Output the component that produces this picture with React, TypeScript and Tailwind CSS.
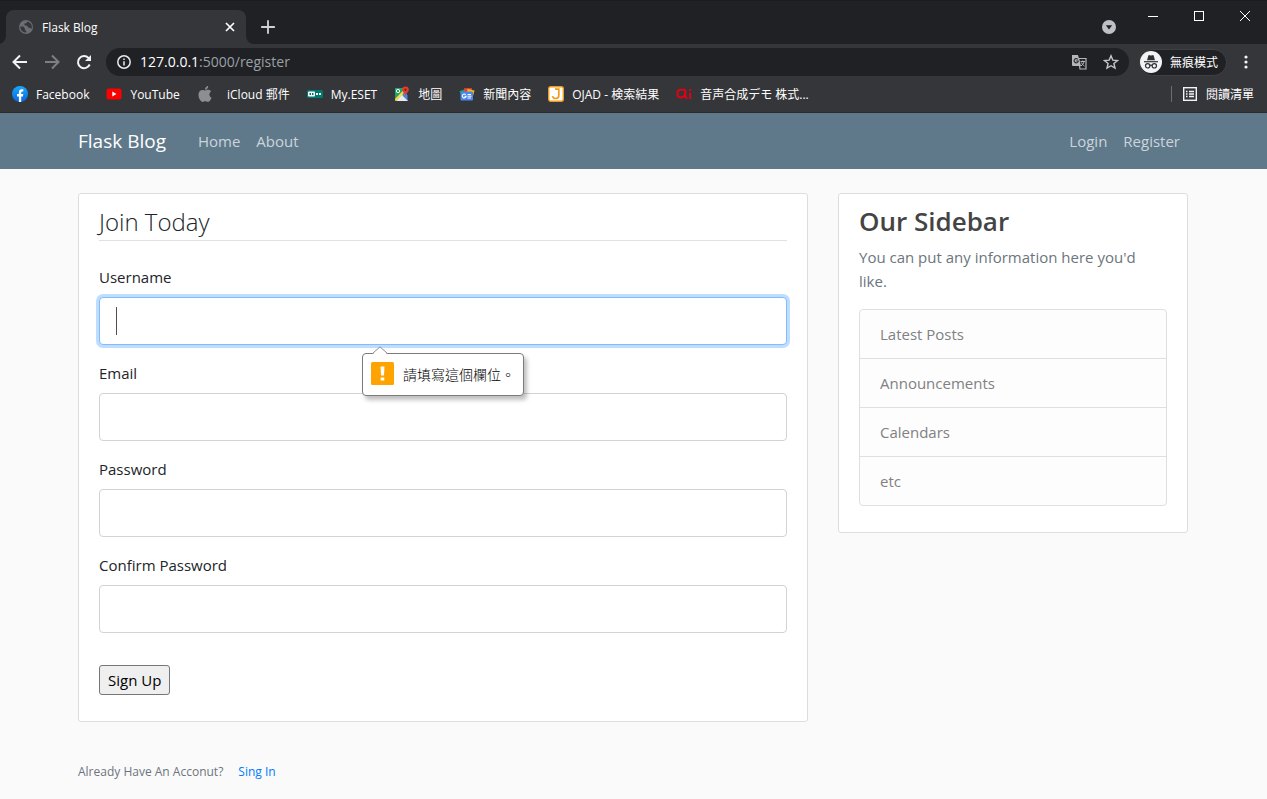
import React from "react";

type IconProps = { className?: string };

function GlobeIcon() {
  return (
    <svg viewBox="0 0 14 14" className="size-3.5 shrink-0">
      <circle cx="7" cy="7" r="7" fill="#6a6d71" />
      <path
        d="M1.300 6.500h2.900l1.600 1.700v1.500l1.400 1.200v1.600C3.900 12.700 1.200 10 1.300 6.500z M8.600 1.500 7.300 3.200 5.500 3.500v1.700l2.700.6 1.200 1.900h1.500l1.600 1.200c1.200-3.200-.6-6.400-3.900-7.400z"
        fill="#35363a"
      />
    </svg>
  );
}

function FacebookIcon() {
  return (
    <svg viewBox="0 0 16 16" className="size-4 shrink-0">
      <defs>
        <linearGradient id="fb" x1="0" y1="0" x2="0" y2="1">
          <stop offset="0" stopColor="#19a8fb" />
          <stop offset="1" stopColor="#0866e0" />
        </linearGradient>
      </defs>
      <circle cx="8" cy="8" r="8" fill="url(#fb)" />
      <path
        d="M6.9 16v-5.500H5V8.100h1.900V6.400c0-2 1.100-3.100 2.900-3.100.8 0 1.500.1 1.500.1v2h-.9c-.9 0-1.200.6-1.200 1.200v1.500h2.100l-.4 2.400H9.200V16z"
        fill="#fff"
      />
    </svg>
  );
}

function YouTubeIcon() {
  return (
    <svg viewBox="0 0 16 16" className="size-4 shrink-0">
      <rect x="0.500" y="2.500" width="15" height="11" rx="2.500" fill="#f00" />
      <path d="M6.300 5.500v5l4.200-2.500z" fill="#fff" />
    </svg>
  );
}

function AppleIcon() {
  return (
    <svg viewBox="0 0 24 24" className="size-4 shrink-0" fill="#8e8e90">
      <path d="M12.152 6.896c-.948 0-2.415-1.078-3.960-1.040-2.040.027-3.910 1.183-4.961 3.014-2.117 3.675-.546 9.103 1.519 12.090 1.013 1.454 2.208 3.090 3.792 3.039 1.520-.065 2.090-.987 3.935-.987 1.831 0 2.350.987 3.960.948 1.637-.026 2.676-1.480 3.676-2.948 1.156-1.688 1.636-3.325 1.662-3.415-.039-.013-3.182-1.221-3.220-4.857-.026-3.040 2.480-4.494 2.597-4.559-1.429-2.090-3.623-2.324-4.390-2.376-2-.156-3.675 1.090-4.610 1.090zM15.530 3.830c.843-1.012 1.400-2.427 1.245-3.830-1.207.052-2.662.805-3.532 1.818-.780.896-1.454 2.338-1.273 3.714 1.338.104 2.715-.688 3.559-1.701" />
    </svg>
  );
}

function EsetIcon() {
  return (
    <svg viewBox="0 0 16 16" className="size-4 shrink-0">
      <rect y="4" width="16" height="8" rx="1.500" fill="#00796f" />
      <rect x="1" y="5.500" width="7" height="5" rx="1" fill="#fff" />
      <path d="M2.500 7h1.500v2H2.500zM5 7h1.500v2H5z" fill="#00796f" />
      <path d="M9 7h2v2H9zM12 7h2v2h-2z" fill="#fff" />
    </svg>
  );
}

function MapsIcon() {
  return (
    <svg viewBox="0 0 16 16" className="size-4 shrink-0">
      <path d="M1 2h12v6L2 14H1z" fill="#1fa463" />
      <path d="M1 13 11 2.500l2 2L2 15l-1-.5z" fill="#fdd835" />
      <path d="M8.500 8 11 5.500l2.500 4V15z" fill="#4a89f3" />
      <path d="M2 15l6-6.200 6 6.200z" fill="#e8eaed" />
      <circle cx="4" cy="5" r="1.700" fill="none" stroke="#fff" />
      <path d="M11.500.500a3.300 3.300 0 0 1 3.300 3.300c0 2.300-2.600 3.200-3.300 6.200-.7-3-3.300-3.900-3.300-6.200A3.300 3.300 0 0 1 11.500.500z" fill="#e53b30" />
      <circle cx="11.500" cy="3.800" r="1.200" fill="#8d1f18" />
    </svg>
  );
}

function NewsIcon() {
  return (
    <svg viewBox="0 0 16 16" className="size-4 shrink-0">
      <path d="M0.500 5 10 2l1 3v3H1.500z" fill="#1e9e58" />
      <path d="M5 2.200h8v5H5z" fill="#ea4335" />
      <path d="M8.500 3l7 1.500L14 10H8z" fill="#fbbc04" />
      <rect x="1.500" y="5.500" width="12.500" height="9" rx="1" fill="#4a86f0" />
      <path d="M6.700 8.700a1.900 1.900 0 1 0 .4 1.600H5.400" fill="none" stroke="#fff" strokeWidth="1.100" />
      <path d="M8.500 8.500h3.500M8.500 10.200h4M8.500 12h3.500" stroke="#fff" />
    </svg>
  );
}

function OjadIcon() {
  return (
    <svg viewBox="0 0 16 16" className="size-4 shrink-0">
      <rect x="0.700" y="0.700" width="14.600" height="14.600" rx="2" fill="#fff" stroke="#f29a1c" strokeWidth="1.400" />
      <path d="M7 3.200h3.800v6.600c0 3.500-5.600 3.600-6.300.3" fill="none" stroke="#f29a1c" strokeWidth="1.700" />
    </svg>
  );
}

function AiIcon() {
  return (
    <svg viewBox="0 0 16 16" className="size-4 shrink-0" fill="none" stroke="#e60012" strokeWidth="2">
      <path d="M9.300 3.800H4.500C2.400 3.800 1.400 5.400 1.400 7.500s1.100 3.900 3.200 3.900c2.400 0 4.500-1.600 4.700-4.400V3.800v6c0 1.500.7 2.300 2 2.700" />
      <path d="M14.200 6.700V13M14.200 3v2" />
    </svg>
  );
}

function TranslateIcon({ className }: IconProps) {
  return (
    <svg viewBox="0 0 15 15" className={className}>
      <path d="M6.500 3.500H14V14H8z" fill="#202124" stroke="#b4b7ba" strokeWidth="1.200" />
      <path d="M8.500 6.500h4.500M10.700 5.500v1M12 6.700c-.4 1.800-1.600 3.300-3 4.200M9.500 7.500c.5 1.500 1.700 2.800 3 3.500" fill="none" stroke="#b4b7ba" />
      <path d="M0 0h6l3 11H1a1 1 0 0 1-1-1z" fill="#b4b7ba" />
      <path d="M5.800 4.300A2.100 2.100 0 1 0 6.300 6H4.200" fill="none" stroke="#303134" strokeWidth="1.200" />
    </svg>
  );
}

function IncognitoIcon() {
  return (
    <svg viewBox="0 0 22 22" className="size-[22px] shrink-0">
      <circle cx="11" cy="11" r="11" fill="#f1f3f4" />
      <path d="M7 9.200 8.300 4.700c.2-.5.600-.7 1.100-.5l1.600.4 1.600-.4c.5-.2.900 0 1.100.5L15 9.200z" fill="#303134" />
      <path d="M4 10.700h14" stroke="#303134" strokeWidth="1.200" />
      <g fill="none" stroke="#303134" strokeWidth="1.200">
        <circle cx="7.700" cy="14.800" r="2.200" />
        <circle cx="14.300" cy="14.800" r="2.200" />
        <path d="M9.900 14.600c.7-.5 1.500-.5 2.200 0" />
      </g>
    </svg>
  );
}

const bookmarks = [
  { label: "Facebook", icon: <FacebookIcon /> },
  { label: "YouTube", icon: <YouTubeIcon /> },
  { label: "\u00a0\u00a0iCloud 郵件", icon: <AppleIcon /> },
  { label: "My.ESET", icon: <EsetIcon /> },
  { label: "地圖", icon: <MapsIcon /> },
  { label: "新聞內容", icon: <NewsIcon /> },
  { label: "OJAD - 検索結果", icon: <OjadIcon />, lang: "ja" },
  { label: "音声合成デモ 株式...", icon: <AiIcon />, lang: "ja" },
];

function BrowserChrome() {
  return (
    <header className="bg-[#35363a] text-xs text-white">
      <div className="flex h-11 items-start border-t border-[#1b1c1e] bg-[#202124]">
        <div className="flex h-full items-end pt-[9px] pl-1.5">
          <div className="relative flex h-full w-60 items-center rounded-t-lg bg-[#35363a] pr-2.5 pl-[13px]">
            <svg viewBox="0 0 8 8" className="absolute right-full bottom-0 size-2" fill="#35363a">
              <path d="M8 0v8H0a8 8 0 0 0 8-8z" />
            </svg>
            <GlobeIcon />
            <span className="ml-[9px] flex-1 pt-0.5">Flask Blog</span>
            <button aria-label="Close tab" className="flex size-3 items-center justify-center">
              <svg viewBox="0 0 10 10" className="size-2.5" stroke="#fff" strokeWidth="1.700">
                <path d="M1 1l8 8M9 1L1 9" />
              </svg>
            </button>
            <svg viewBox="0 0 8 8" className="absolute bottom-0 left-full size-2" fill="#35363a">
              <path d="M0 0v8h8a8 8 0 0 1-8-8z" />
            </svg>
          </div>
          <button aria-label="New tab" className="ml-3.5 flex h-full items-center">
            <svg viewBox="0 0 14 14" className="size-4" stroke="#d0d2d5" strokeWidth="1.600">
              <path d="M7 1v12M1 7h12" />
            </svg>
          </button>
        </div>
        <div className="ml-auto flex">
          <button aria-label="Search tabs" className="mt-[19px] mr-[13px] self-start">
            <svg viewBox="0 0 14 14" className="size-3.5">
              <circle cx="7" cy="7" r="7" fill="#bdc1c6" />
              <path d="M3.800 5.200h6.400L7 9.500z" fill="#202124" />
            </svg>
          </button>
          <button aria-label="Minimize" className="flex h-[30px] w-[46px] items-center justify-center pl-0.5">
            <svg viewBox="0 0 10 10" className="size-2.5" stroke="#fff" shapeRendering="crispEdges">
              <path d="M0 5.500h10" />
            </svg>
          </button>
          <button aria-label="Maximize" className="flex h-[30px] w-[46px] items-center justify-center pl-0.5">
            <svg viewBox="0 0 10 10" className="size-2.5" stroke="#fff" fill="none" shapeRendering="crispEdges">
              <rect x="0.500" y="0.500" width="9" height="9" />
            </svg>
          </button>
          <button aria-label="Close window" className="flex h-[30px] w-[46px] items-center justify-center pl-0.5">
            <svg viewBox="0 0 10 10" className="size-2.5" stroke="#fff">
              <path d="M0 0l10 10M10 0L0 10" />
            </svg>
          </button>
        </div>
      </div>

      <div className="flex h-9 items-center pr-[19px] pl-3">
        <div className="flex gap-4">
          <button aria-label="Back">
            <svg viewBox="0 0 16 16" className="size-4" fill="none" stroke="#f1f3f4" strokeWidth="2">
              <path d="M15 8H2M8 1.500 1.500 8 8 14.500" />
            </svg>
          </button>
          <button aria-label="Forward">
            <svg viewBox="0 0 16 16" className="size-4" fill="none" stroke="#7d7f83" strokeWidth="2">
              <path d="M1 8h13M8 1.500 14.500 8 8 14.500" />
            </svg>
          </button>
          <button aria-label="Reload">
            <svg viewBox="0 0 16 16" className="size-4" fill="none" stroke="#f1f3f4" strokeWidth="2">
              <path d="M13.700 10.500A6.100 6.100 0 1 1 12.500 3.900L14 5.400" />
              <path d="M15 1v6H9z" fill="#f1f3f4" stroke="none" />
            </svg>
          </button>
        </div>
        <div className="ml-3.5 flex h-7 flex-1 items-center rounded-full bg-[#202124] pr-2.5 pl-[11px]">
          <svg viewBox="0 0 14 14" className="size-3.5 shrink-0" fill="none" stroke="#e8eaed" strokeWidth="1.500">
            <circle cx="7" cy="7" r="6.200" />
            <path d="M7 6.200v4.300M7 3.500v1.600" />
          </svg>
          <span className="ml-[9px] flex-1 text-sm text-[#9aa0a6]">
            <span className="text-white">127.0.0.1</span>:5000/register
          </span>
          <button aria-label="Translate">
            <TranslateIcon className="size-[15px]" />
          </button>
          <button aria-label="Bookmark this page" className="ml-4">
            <svg viewBox="0 0 16 16" className="size-4" fill="none" stroke="#c4c7ca" strokeWidth="1.400">
              <path d="M8 1.800l1.800 4.300 4.700.4-3.600 3 1.100 4.600L8 11.700l-4 2.400 1.100-4.600-3.600-3 4.700-.4z" />
            </svg>
          </button>
        </div>
        <button className="ml-2.5 flex h-[27px] items-center gap-2 rounded-full border border-[#3f4044] bg-[#202124] pr-2">
          <IncognitoIcon />
          <span className="pt-0.5">無痕模式</span>
        </button>
        <button aria-label="Menu" className="ml-[17px]">
          <svg viewBox="0 0 4 16" className="h-4 w-1" fill="#f1f3f4">
            <circle cx="2" cy="3" r="1.600" />
            <circle cx="2" cy="8" r="1.600" />
            <circle cx="2" cy="13" r="1.600" />
          </svg>
        </button>
      </div>

      <div className="flex h-[33px] items-center gap-[17px] border-b border-[#2a2b2e] px-3 pr-[13px] pb-1">
        {bookmarks.map((b) => (
          <a key={b.label} href="#" lang={b.lang} className="flex items-center gap-2 whitespace-nowrap">
            {b.icon}
            <span className="pt-0.5">{b.label}</span>
          </a>
        ))}
        <div className="ml-auto flex items-center">
          <span className="h-4 w-px bg-[#6b6d70]" />
          <button className="ml-[11px] flex items-center gap-[9px]">
            <svg viewBox="0 0 14 14" className="size-3.5" fill="none" stroke="#f1f3f4">
              <rect x="0.700" y="0.700" width="12.600" height="12.600" strokeWidth="1.400" />
              <path d="M3 4.500h1.500M6 4.500h5M3 7h1.500M6 7h5M3 9.500h1.500M6 9.500h5" strokeWidth="1.300" />
            </svg>
            <span className="pt-0.5">閱讀清單</span>
          </button>
        </div>
      </div>
    </header>
  );
}

function Navbar() {
  return (
    <nav className="bg-[#5f788a]">
      <div className="mx-auto flex h-14 max-w-[1141px] items-center pr-4 pl-[15px]">
        <a href="#" className="text-[19px] text-white">
          Flask Blog
        </a>
        <div className="ml-8 flex flex-1 gap-4 pr-2 text-[#cbd5db]">
          <a href="#">Home</a>
          <a href="#">About</a>
          <a href="#" className="ml-auto">
            Login
          </a>
          <a href="#">Register</a>
        </div>
      </div>
    </nav>
  );
}

function ValidationBubble() {
  return (
    <div
      role="alert"
      lang="zh-TW"
      className="absolute top-[88px] left-[263px] z-10 flex h-[43px] w-[162px] items-center gap-[9px] rounded border border-[#7b7b7b] bg-white pb-0.5 pl-2 font-['Noto_Sans_CJK_TC',sans-serif] text-sm text-black shadow-[3px_4px_4px_rgba(0,0,0,0.25)]"
    >
      <svg viewBox="0 0 18 9" className="absolute -top-2 left-2 h-[9px] w-[18px]">
        <path d="M1 9 9 1l8 8z" fill="#fff" />
        <path d="M1 8 9 .8 17 8" fill="none" stroke="#8a8a8a" />
      </svg>
      <svg viewBox="0 0 23 23" className="size-[23px] shrink-0">
        <rect width="23" height="23" rx="1.500" fill="#ffa300" />
        <path d="M9.500 4.500h4l-.5 9h-3zM9.700 15.500h3.600v3H9.700z" fill="#fff" />
      </svg>
      <span className="font-light whitespace-nowrap">請填寫這個欄位。</span>
    </div>
  );
}

const fields = [
  { id: "username", label: "Username", type: "text" },
  { id: "email", label: "Email", type: "email" },
  { id: "password", label: "Password", type: "password" },
  { id: "confirm", label: "Confirm Password", type: "password" },
];

function RegisterForm() {
  return (
    <form className="rounded-[3px] border border-[#dddddd] bg-white px-5 py-2.5">
      <fieldset>
        <legend className="mb-6 w-full border-b border-[#dee2e6] text-2xl leading-9 font-light text-[#212529]">
          Join Today
        </legend>
        {fields.map((f) => {
          const active = f.id === "username";
          return (
            <div key={f.id} className="relative mb-4">
              <label htmlFor={f.id} className="mb-2 block text-[#212529]">
                {f.label}
              </label>
              <input
                id={f.id}
                type={f.type}
                className={
                  active
                    ? "block h-12 w-full rounded border border-[#80bdff] bg-white px-4 caret-transparent shadow-[0_0_0_3px_#bfdeff] outline-none"
                    : "block h-12 w-full rounded border border-[#ced4da] bg-white px-4 outline-none"
                }
              />
              {active && <span className="absolute bottom-2.5 left-[17px] h-7 w-px bg-[#495057]" />}
              {active && <ValidationBubble />}
            </div>
          );
        })}
      </fieldset>
      <button
        type="button"
        className="my-4 block h-[30px] rounded-[3px] border border-[#767676] bg-[#efefef] px-2 text-black"
      >
        Sign Up
      </button>
    </form>
  );
}

function Sidebar() {
  return (
    <aside className="rounded-[3px] border border-[#dddddd] bg-white px-5 py-2.5">
      <h3 className="mb-[7px] text-[26px] leading-[34px] font-semibold text-[#444444]">Our Sidebar</h3>
      <p className="mb-4 pr-4 text-[#6c757d]">You can put any information here you'd like.</p>
      <ul className="mb-4 divide-y divide-[#dfdfdf] rounded border border-[#dfdfdf] bg-[#fdfdfe] text-[#818182]">
        {["Latest Posts", "Announcements", "Calendars", "etc"].map((item) => (
          <li key={item} className="px-5 py-3">
            {item}
          </li>
        ))}
      </ul>
    </aside>
  );
}

export default function App() {
  return (
    <div className="min-h-screen bg-[#fafafa] font-['Open_Sans','Noto_Sans_CJK_TC',sans-serif] text-[15px] leading-6">
      <BrowserChrome />
      <Navbar />
      <main className="mx-auto grid max-w-[1141px] grid-cols-12 gap-[30px] pt-6 pr-4 pl-[15px]">
        <section className="col-span-8">
          <RegisterForm />
          <p className="pt-[38px] text-xs leading-6 text-[#6c757d]">
            Already Have An Acconut?
            <a href="#" className="ml-[15px] text-[#007bff]">
              Sing In
            </a>
          </p>
        </section>
        <div className="col-span-4">
          <Sidebar />
        </div>
      </main>
    </div>
  );
}
